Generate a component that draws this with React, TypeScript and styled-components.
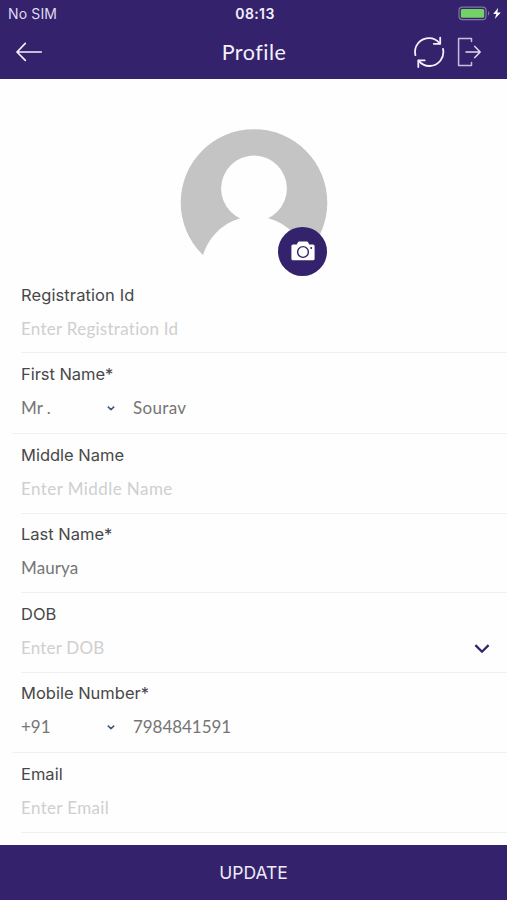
import React from "react";
import styled, { createGlobalStyle } from "styled-components";

const PURPLE = "#34236c";

const GlobalStyle = createGlobalStyle`
  *, *::before, *::after { box-sizing: border-box; }
  body { margin: 0; background: #fefefe; }
`;

const Screen = styled.div`
  width: 100%;
  height: 900px;
  display: flex;
  flex-direction: column;
  overflow: hidden;
  background: #fefefe;
  font-family: Inter, "Liberation Sans", sans-serif;
`;

const Top = styled.header`
  height: 79px;
  flex: none;
  background: ${PURPLE};
  color: #f3f0fb;
`;

const StatusBar = styled.div`
  height: 28px;
  padding: 0 5px 0 8px;
  display: grid;
  grid-template-columns: 1fr auto 1fr;
  align-items: center;
  font-size: 14px;
  line-height: 28px;
`;

const Carrier = styled.span`
  color: #dfdaf0;
  letter-spacing: 0.15px;
`;

const Clock = styled.span`
  font-weight: 600;
  letter-spacing: 0.4px;
`;

const Power = styled.span`
  display: flex;
  justify-content: flex-end;
`;

const NavBar = styled.div`
  height: 48px;
  padding: 0 25px 0 15px;
  display: grid;
  grid-template-columns: 1fr auto 1fr;
  align-items: center;
`;

const Title = styled.h1`
  margin: 0 0 1px 11px;
  font: 400 21.5px/30px Lato, sans-serif;
  letter-spacing: 0.5px;
`;

const IconButton = styled.button`
  display: flex;
  padding: 0;
  border: 0;
  background: none;
  color: inherit;
`;

const Actions = styled.div`
  display: flex;
  justify-content: flex-end;
  align-items: center;
  gap: 12px;
`;

const Content = styled.main`
  flex: 1;
  min-height: 0;
`;

const Portrait = styled.div`
  position: relative;
  width: 148px;
  height: 148px;
  margin: 49px auto -3px;
`;

const CameraButton = styled.button`
  position: absolute;
  right: 0.5px;
  bottom: 0.5px;
  width: 49px;
  height: 49px;
  display: flex;
  align-items: center;
  justify-content: center;
  padding: 0;
  border: 0;
  border-radius: 50%;
  background: ${PURPLE};
`;

const Field = styled.section<{ $height: number; $top: number; $wide?: boolean }>`
  height: ${(p) => p.$height}px;
  margin-left: ${(p) => (p.$wide ? 12 : 21)}px;
  padding: ${(p) => p.$top}px 17px 0 ${(p) => (p.$wide ? 9 : 0)}px;
  border-bottom: 1px solid #f1f1f1;
`;

const Label = styled.div<{ $spacing: number }>`
  font-size: 16.5px;
  line-height: 20px;
  letter-spacing: ${(p) => p.$spacing}px;
  color: #484848;
  white-space: nowrap;
`;

const Entry = styled.div`
  height: 24px;
  margin-top: 12px;
  display: flex;
  align-items: center;
`;

const Value = styled.span<{ $spacing: number; $muted?: boolean }>`
  flex: 1;
  font: 400 17px/24px Lato, sans-serif;
  letter-spacing: ${(p) => p.$spacing}px;
  color: ${(p) => (p.$muted ? "#cfcfcf" : "#757575")};
  white-space: nowrap;
`;

const Select = styled.div`
  width: 112px;
  flex: none;
  display: flex;
  align-items: center;
  padding-right: 18px;
`;

const Footer = styled.button`
  height: 55px;
  flex: none;
  padding: 0;
  border: 0;
  background: ${PURPLE};
  color: #eeeaf8;
  font: 400 17.5px/55px Inter, sans-serif;
  letter-spacing: -0.05px;
`;

const BatteryIcon = () => (
  <svg width="44" height="16" viewBox="0 0 44 16" fill="none">
    <rect x="1" y="1.2" width="27" height="12.4" rx="3.4" stroke="#82779f" strokeWidth="1.2" />
    <rect x="2.8" y="3" width="23.4" height="8.8" rx="1.6" fill="#72d267" />
    <path d="M30 5.3c1.7.5 1.7 3.7 0 4.2z" fill="#82779f" />
    <path d="M40.2 1.7 35.2 8h3.1L36.8 12.9 42.8 6.5h-3.5z" fill="#fff" />
  </svg>
);

const BackIcon = () => (
  <svg width="28" height="20" viewBox="0 0 28 20" fill="none" stroke="currentColor" strokeWidth="1.7" strokeLinecap="round" strokeLinejoin="round">
    <path d="M26.2 10H2M10.3 1.4 2 10l8.3 8.3" />
  </svg>
);

const RefreshIcon = () => (
  <svg width="32" height="34" viewBox="0 0 32 34" fill="none" stroke="currentColor" strokeWidth="1.8" strokeLinecap="round" strokeLinejoin="round">
    <path d="M2.4 20.2C.5 11.6 6.6 3.4 15.4 3.1c4.7-.2 8.6 1.8 11.4 5.4" />
    <path d="M27.2 2.6v6.2h-6.4" />
    <path d="M30 14c1.9 8.6-4.2 16.6-13 17-4.7.2-8.6-1.8-11.4-5.4" />
    <path d="M5.3 32v-6.6h6.4" />
  </svg>
);

const LogoutIcon = () => (
  <svg width="25" height="30" viewBox="0 0 25 30" fill="none" stroke="#c7bfe0" strokeWidth="1.5" strokeLinecap="round" strokeLinejoin="round">
    <path d="M14.5 4.5V1.4H1.6v27.2h12.9v-3.1" />
    <path d="M9 15h14M17.8 9.4l5.4 5.6-5.4 5.6" stroke="#e0dbef" />
  </svg>
);

const AvatarIcon = () => (
  <svg width="148" height="148" viewBox="0 0 148 148">
    <circle cx="74" cy="74.5" r="73.3" fill="#c4c4c4" />
    <circle cx="74" cy="60.5" r="32.9" fill="#fefefe" />
    <circle cx="74.5" cy="142" r="53.5" fill="#fefefe" />
  </svg>
);

const CameraIcon = () => (
  <svg width="24" height="20" viewBox="0 0 24 20">
    <path d="M2 3.5h3.7L7 1.2Q7.3.6 8 .6h8q.7 0 1 .6l1.3 2.3H22q1.6 0 1.6 1.6v12.6q0 1.6-1.6 1.6H2q-1.6 0-1.6-1.6V5.1Q.4 3.5 2 3.5Z" fill="#fff" />
    <circle cx="12" cy="11" r="5.4" fill="none" stroke={PURPLE} strokeWidth="1.4" />
    <circle cx="20.2" cy="7" r="1" fill={PURPLE} />
  </svg>
);

const SmallChevron = () => (
  <svg width="8" height="6" viewBox="0 0 8 6" fill="none" stroke="#42577a" strokeWidth="1.5" strokeLinejoin="round">
    <path d="M.8 1.6 4 4.6l3.2-3" />
  </svg>
);

const LargeChevron = () => (
  <svg width="16" height="11" viewBox="0 0 16 11" fill="none" stroke={PURPLE} strokeWidth="2.3">
    <path d="M1.4 2.1 8 8.7l6.6-6.6" />
  </svg>
);

type FieldData = {
  label: string;
  labelSpacing: number;
  text: string;
  textSpacing: number;
  height: number;
  top: number;
  muted?: boolean;
  prefix?: string;
  expandable?: boolean;
};

const fields: FieldData[] = [
  { label: "Registration Id", labelSpacing: 0.1, text: "Enter Registration Id", textSpacing: 0.27, height: 80, top: 12, muted: true },
  { label: "First Name*", labelSpacing: -0.04, prefix: "Mr .", text: "Sourav", textSpacing: 0.35, height: 81, top: 11 },
  { label: "Middle Name", labelSpacing: 0, text: "Enter Middle Name", textSpacing: 0.43, height: 80, top: 11, muted: true },
  { label: "Last Name*", labelSpacing: 0, text: "Maurya", textSpacing: 0.1, height: 79, top: 10 },
  { label: "DOB", labelSpacing: 0, text: "Enter DOB", textSpacing: 0.2, height: 80, top: 11, muted: true, expandable: true },
  { label: "Mobile Number*", labelSpacing: 0, prefix: "+91", text: "7984841591", textSpacing: -0.05, height: 80, top: 10 },
  { label: "Email", labelSpacing: 0, text: "Enter Email", textSpacing: 0.35, height: 80, top: 11, muted: true },
];

export default function App() {
  return (
    <Screen>
      <GlobalStyle />
      <Top>
        <StatusBar>
          <Carrier>No SIM</Carrier>
          <Clock>08:13</Clock>
          <Power><BatteryIcon /></Power>
        </StatusBar>
        <NavBar>
          <IconButton aria-label="Back"><BackIcon /></IconButton>
          <Title>Profile</Title>
          <Actions>
            <IconButton aria-label="Refresh"><RefreshIcon /></IconButton>
            <IconButton aria-label="Log out"><LogoutIcon /></IconButton>
          </Actions>
        </NavBar>
      </Top>
      <Content>
        <Portrait>
          <AvatarIcon />
          <CameraButton aria-label="Change photo"><CameraIcon /></CameraButton>
        </Portrait>
        {fields.map((f) => (
          <Field key={f.label} $height={f.height} $top={f.top} $wide={!!f.prefix}>
            <Label $spacing={f.labelSpacing}>{f.label}</Label>
            <Entry>
              {f.prefix && (
                <Select>
                  <Value $spacing={0}>{f.prefix}</Value>
                  <SmallChevron />
                </Select>
              )}
              <Value $spacing={f.textSpacing} $muted={f.muted}>{f.text}</Value>
              {f.expandable && <LargeChevron />}
            </Entry>
          </Field>
        ))}
      </Content>
      <Footer>UPDATE</Footer>
    </Screen>
  );
}
